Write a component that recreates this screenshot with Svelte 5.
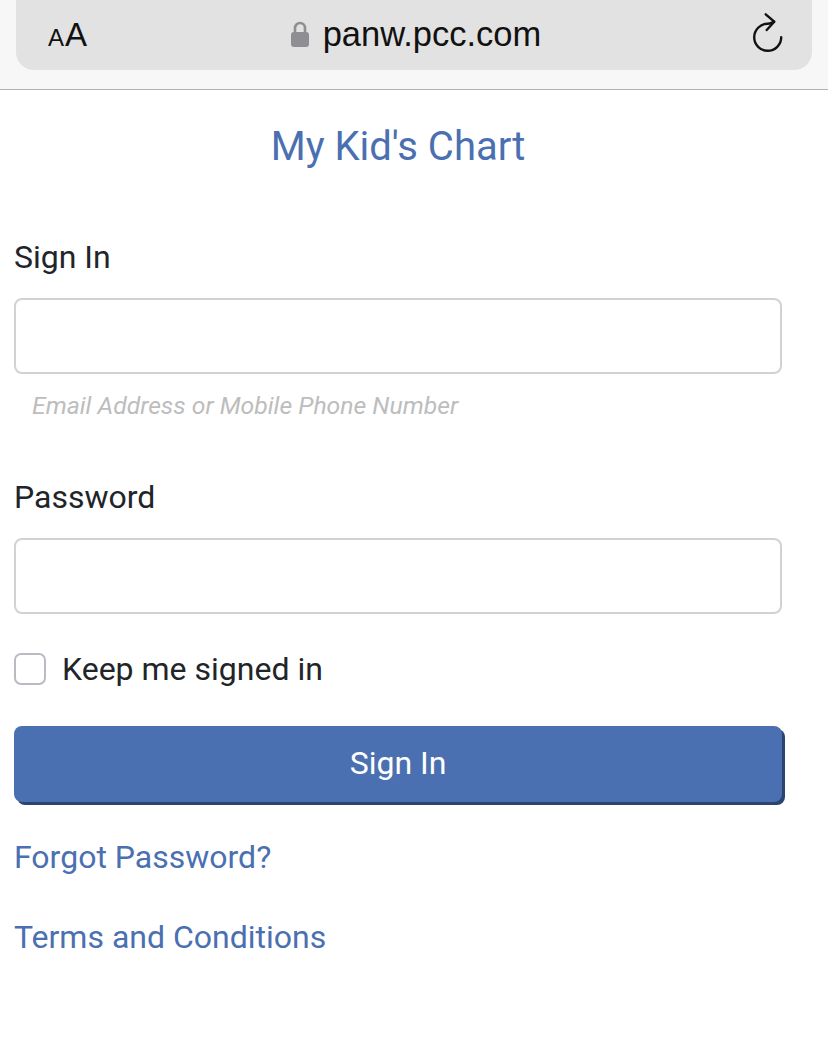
<script>
let email = '';
let password = '';
let keepSignedIn = false;
</script>

<div class="browser-bar">
    <div class="url-bar">
        <span class="text-size"><span class="small-a">A</span><span class="big-a">A</span></span>
        <span class="address">
            <svg class="lock" viewBox="0 0 18 26" width="18" height="26" aria-hidden="true">
                <path d="M4 12V7a5 5 0 0 1 10 0v5" fill="none" stroke="#8e8e93" stroke-width="2.6"/>
                <rect x="0" y="11" width="18" height="15" rx="3" fill="#8e8e93"/>
            </svg>
            <span class="host">panw.pcc.com</span>
        </span>
        <svg class="reload" viewBox="0 0 32 48" width="32" height="48" aria-hidden="true">
            <path d="M22 10.7C20 11.5 18 12.8 15.7 12.8A13.5 13.5 0 1 0 29.2 26.3" fill="none" stroke="#111" stroke-width="2.4" stroke-linecap="round"/>
            <path d="M13.7 3.3L22.3 10.7L14.7 19" fill="none" stroke="#111" stroke-width="2.4" stroke-linecap="round" stroke-linejoin="round"/>
        </svg>
    </div>
</div>

<main class="page">
    <h1 class="title">My Kid's Chart</h1>

    <form class="login" on:submit|preventDefault>
        <label class="field-label" for="email">Sign In</label>
        <input id="email" class="text-input" type="text" bind:value={email} />
        <p class="hint">Email Address or Mobile Phone Number</p>

        <label class="field-label password-label" for="password">Password</label>
        <input id="password" class="text-input" type="password" bind:value={password} />

        <label class="keep-signed">
            <input type="checkbox" bind:checked={keepSignedIn} />
            <span>Keep me signed in</span>
        </label>

        <button class="submit" type="submit">Sign In</button>
    </form>

    <a class="link forgot" href="#forgot">Forgot Password?</a>
    <a class="link terms" href="#terms">Terms and Conditions</a>
</main>

<style>
    :global(body) {
        background: #fff;
        font-family: Roboto, "Liberation Sans", sans-serif;
    }

    .browser-bar {
        height: 89px;
        padding: 0 16px;
        background: #f7f7f7;
        border-bottom: 1px solid #b2b2b2;
    }

    .url-bar {
        display: grid;
        grid-template-columns: 1fr auto 1fr;
        align-items: center;
        height: 70px;
        padding: 0 28px 0 32px;
        background: #e2e2e2;
        border-radius: 0 0 18px 18px;
        font-family: "Liberation Sans", Arial, sans-serif;
        color: #111;
    }

    .text-size {
        display: flex;
        align-items: baseline;
        gap: 1px;
        margin-top: -1px;
    }

    .small-a {
        font-size: 24px;
    }

    .big-a {
        font-size: 33px;
    }

    .address {
        display: flex;
        align-items: center;
        gap: 14px;
        font-size: 34.5px;
    }

    .host {
        margin-top: -2px;
    }

    .lock {
        margin-top: -2px;
    }

    .reload {
        justify-self: end;
    }

    .page {
        padding: 0 46px 0 14px;
        color: #212529;
    }

    .title {
        margin: 0;
        padding-top: 34px;
        font-size: 40px;
        line-height: 46px;
        font-weight: 400;
        text-align: center;
        color: #4a70b1;
    }

    .login {
        display: flex;
        flex-direction: column;
        margin-top: 67px;
    }

    .field-label {
        font-size: 32px;
        line-height: 40px;
    }

    .text-input {
        box-sizing: border-box;
        width: 100%;
        height: 76px;
        margin-top: 21px;
        background: #fff;
        border: 2px solid #d0d2d6;
        border-radius: 8px;
        outline: none;
    }

    .hint {
        margin: 17px 0 0 18px;
        font-size: 24.75px;
        line-height: 30px;
        font-style: italic;
        color: #bdbdbd;
    }

    .password-label {
        margin-top: 56px;
    }

    .keep-signed {
        display: flex;
        align-items: center;
        gap: 16px;
        margin-top: 35px;
        font-size: 32px;
        line-height: 40px;
    }

    .keep-signed input {
        appearance: none;
        box-sizing: border-box;
        width: 32px;
        height: 32px;
        margin: 0;
        background: #fff;
        border: 2px solid #b8bcc2;
        border-radius: 7px;
    }

    .submit {
        width: 100%;
        height: 76px;
        margin-top: 37px;
        padding: 0 0 2px;
        background: #4a70b1;
        color: #fff;
        border: none;
        border-radius: 8px;
        box-shadow: 3px 3px 0 #2c4470;
        font-family: inherit;
        font-size: 32px;
    }

    .link {
        display: block;
        font-size: 32px;
        line-height: 40px;
        color: #4a70b1;
        text-decoration: none;
    }

    .forgot {
        margin-top: 35px;
    }

    .terms {
        margin-top: 40px;
    }
</style>
